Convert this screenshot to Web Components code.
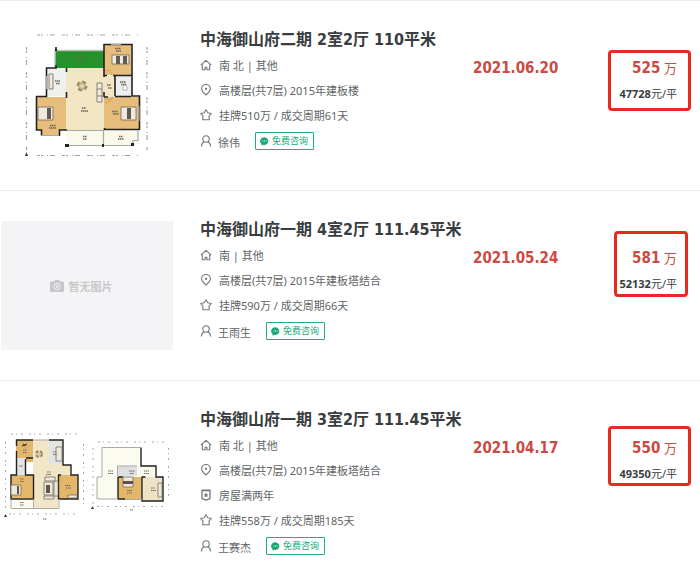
<!DOCTYPE html>
<html lang="zh-CN">
<head>
<meta charset="utf-8">
<title>成交房源</title>
<style>
  body {
    --number-font: "DejaVu Sans Condensed", "Noto Sans CJK SC", sans-serif;
    margin: 0;
    background: #fff;
    color: #606466;
    font-family: "Noto Sans", "Noto Sans CJK SC", sans-serif;
    font-size: 11px;
  }
</style>
</head>
<body>
<main>
  <deal-row>
    <floor-plan slot="thumb" plan="single"></floor-plan>
    <a slot="title" href="#deal-1">中海御山府二期 2室2厅 110平米</a>
    <info-line icon="home">南 北 | 其他</info-line>
    <info-line icon="pin">高楼层(共7层) 2015年建板楼</info-line>
    <info-line icon="star">挂牌510万 / 成交周期61天</info-line>
    <agent-line slot="agent">徐伟</agent-line>
    <time slot="date" datetime="2021-06-20">2021.06.20</time>
    <deal-price slot="price" total="525" unit="47728"></deal-price>
  </deal-row>
  <deal-row>
    <no-photo slot="thumb">暂无图片</no-photo>
    <a slot="title" href="#deal-2">中海御山府一期 4室2厅 111.45平米</a>
    <info-line icon="home">南 | 其他</info-line>
    <info-line icon="pin">高楼层(共7层) 2015年建板塔结合</info-line>
    <info-line icon="star">挂牌590万 / 成交周期66天</info-line>
    <agent-line slot="agent">王雨生</agent-line>
    <time slot="date" datetime="2021-05-24">2021.05.24</time>
    <deal-price slot="price" total="581" unit="52132" mark="tall"></deal-price>
  </deal-row>
  <deal-row>
    <floor-plan slot="thumb" plan="double"></floor-plan>
    <a slot="title" href="#deal-3">中海御山府一期 3室2厅 111.45平米</a>
    <info-line icon="home">南 北 | 其他</info-line>
    <info-line icon="pin">高楼层(共7层) 2015年建板塔结合</info-line>
    <info-line icon="badge">房屋满两年</info-line>
    <info-line icon="star">挂牌558万 / 成交周期185天</info-line>
    <agent-line slot="agent">王赛杰</agent-line>
    <time slot="date" datetime="2021-04-17">2021.04.17</time>
    <deal-price slot="price" total="550" unit="49350" mark="high"></deal-price>
  </deal-row>
</main>

<script>
const icons = {
  home: '<path d="M.8 6.200 6 1.300l5.200 4.900M2.300 5.500v5.300h2.800V8.200h1.800v2.600h2.800V5.500"/>',
  pin: '<path d="M6 11C3.300 8.500 1.600 6.900 1.600 4.700a4.400 4.200 0 0 1 8.800 0C10.400 6.900 8.700 8.500 6 11z"/><circle cx="6" cy="4.800" r=".6" fill="#73777a"/>',
  star: '<path d="M6 .8 7.800 3.700 11.300 4.500 9 7.200 9.300 10.700H2.700L3 7.200.7 4.500 4.200 3.700z"/>',
  badge: '<path d="M2 1.200h8v8.400L6 11.200 2 9.600zM2 1.700h8" stroke-width="1.300"/><path d="M6 3.500 6.800 5.200 8.400 5.400 7.200 6.600 7.500 8.300 6 7.500 4.500 8.300 4.800 6.600 3.600 5.400 5.200 5.200z" fill="#73777a" stroke="none"/>',
  user: '<circle cx="6" cy="4" r="3.200"/><path d="M1.400 11.500C1.400 9.200 2.600 7.500 4.300 6.800M7.700 6.800c1.700.7 2.900 2.400 2.900 4.700"/>'
};

function iconSvg(name) {
  return `<svg width="12" height="12" viewBox="0 0 12 12" fill="none" stroke="#73777a" stroke-width="1.100" stroke-linejoin="round" aria-hidden="true">${icons[name]}</svg>`;
}

class DealRow extends HTMLElement {
  constructor() {
    super();
    this.attachShadow({ mode: "open" });
  }

  connectedCallback() {
    this.shadowRoot.innerHTML = `
      <style>
      :host {
        display: grid;
        grid-template-columns: 172px minmax(0, 1fr) 86px 118px;
        box-sizing: border-box;
        min-height: 190px;
        padding: 26px 23px 0 1px;
        border-top: 1px solid #eeeeee;
      }
      .thumb {
        padding-top: 4px;
      }
      .info {
        padding-left: 27px;
      }
      h2 {
        margin: 0;
        font-family: var(--number-font);
        font-size: 16px;
        line-height: 25px;
        white-space: nowrap;
      }
      ::slotted(a) {
        color: #393d40;
        text-decoration: none;
      }
      .date {
        padding-top: 28px;
        color: #cb4a42;
        font-family: var(--number-font);
        font-size: 15px;
        font-weight: bold;
        line-height: 26px;
      }
      .price {
        display: flex;
        justify-content: flex-end;
        align-items: flex-start;
        padding-top: 28px;
      }
      </style>
      <div class="thumb"><slot name="thumb"></slot></div>
      <div class="info">
        <h2><slot name="title"></slot></h2>
        <slot></slot>
        <slot name="agent"></slot>
      </div>
      <div class="date"><slot name="date"></slot></div>
      <div class="price"><slot name="price"></slot></div>
    `;
  }
}

class InfoLine extends HTMLElement {
  constructor() {
    super();
    this.attachShadow({ mode: "open" });
  }

  connectedCallback() {
    this.shadowRoot.innerHTML = `
      <style>
      :host {
        display: flex;
        align-items: center;
        gap: 7px;
        height: 25px;
        white-space: nowrap;
      }
      </style>
      ${iconSvg(this.getAttribute("icon"))}
      <span><slot></slot></span>
    `;
  }
}

class AgentLine extends HTMLElement {
  constructor() {
    super();
    this.attachShadow({ mode: "open" });
  }

  connectedCallback() {
    this.shadowRoot.innerHTML = `
      <style>
      :host {
        display: flex;
        align-items: center;
        height: 28px;
        gap: 6px;
        white-space: nowrap;
      }
      .name {
        padding-top: 2px;
      }
      button {
        display: flex;
        align-items: center;
        gap: 3px;
        box-sizing: border-box;
        height: 18px;
        margin-left: 9px;
        padding: 0 5px 0 4px;
        border: 1px solid #22ac7d;
        border-radius: 1px;
        background: #fff;
        color: #18a876;
        font-family: inherit;
        font-size: 9px;
        line-height: 16px;
      }
      </style>
      ${iconSvg("user")}
      <span class="name"><slot></slot></span>
      <button type="button">
        <svg width="9" height="9" viewBox="0 0 9 9" aria-hidden="true">
          <path d="M4.500.3a4.100 3.800 0 1 1-1.200 7.500L1.500 8.800 1.600 7A4.100 3.800 0 0 1 4.500.3z" fill="#18a876"/>
          <path d="M2.600 4h.9M4.200 4h.9M5.800 4h.8" stroke="#fff"/>
        </svg>
        <span>免费咨询</span>
      </button>
    `;
  }
}

class DealPrice extends HTMLElement {
  constructor() {
    super();
    this.attachShadow({ mode: "open" });
  }

  connectedCallback() {
    const total = this.getAttribute("total");
    const unit = this.getAttribute("unit");
    this.shadowRoot.innerHTML = `
      <style>
      :host {
        --mark: -5px -14px -6px -11px;
        display: block;
        position: relative;
        text-align: right;
        white-space: nowrap;
      }
      :host([mark="tall"]) {
        --mark: -14px -11px -2px -5px;
      }
      :host([mark="high"]) {
        --mark: -9px -14px -1px -11px;
      }
      /* red frame drawn round the two prices */
      :host::after {
        content: "";
        position: absolute;
        inset: var(--mark);
        border: 3px solid #e62a20;
        border-radius: 4px;
      }
      p {
        margin: 0;
      }
      .total {
        color: #cb4a42;
        font-family: var(--number-font);
        font-size: 13px;
        line-height: 26px;
      }
      .total b {
        font-size: 15px;
      }
      .unit {
        color: #393d40;
        line-height: 23px;
      }
      </style>
      <p class="total"><b>${total}</b> 万</p>
      <p class="unit"><b>${unit}</b>元/平</p>
    `;
  }
}

class NoPhoto extends HTMLElement {
  constructor() {
    super();
    this.attachShadow({ mode: "open" });
  }

  connectedCallback() {
    this.shadowRoot.innerHTML = `
      <style>
      :host {
        display: flex;
        align-items: center;
        justify-content: center;
        gap: 5px;
        height: 129px;
        padding-right: 12px;
        background: #f4f3f5;
        color: #c8c8ca;
        font-weight: bold;
      }
      </style>
      <svg width="14" height="12" viewBox="0 0 14 12" aria-hidden="true">
        <path d="M1 1.500h3L5 0h4l1 1.500h3a1 1 0 0 1 1 1V11a1 1 0 0 1-1 1H1a1 1 0 0 1-1-1V2.500a1 1 0 0 1 1-1z" fill="#c8c8ca"/>
        <circle cx="7" cy="6.500" r="3.200" fill="none" stroke="#f4f3f5"/>
        <circle cx="7" cy="6.500" r="1.200" fill="#f4f3f5"/>
      </svg>
      <span><slot></slot></span>
    `;
  }
}

const plans = {
  single: `
    <g stroke="#a3a3a3" stroke-width="1.200" stroke-dasharray="3 1 2 4 1 2 5 7">
      <path d="M36 4H137M36 124.500H137M25.500 16V119M146 16V119"/>
    </g>
    <path d="M24 125l1.500-4 1.500 4z" fill="#333"/>
    <path d="M54 19h49v18H54z" fill="#26902c"/>
    <path d="M54 19.500h49M54 19v18" stroke="#b9c4b9" stroke-width="1.500"/>
    <path d="M65 37h38v8h11v21h-11v33H65z" fill="#f2e6c5"/>
    <path d="M45 37h20v28H45z" fill="#f0f0ee"/>
    <path d="M103 14h27v30h-27zM35 66h30v33h-7v6H41v-6h-6zM103 66h35v33h-35z" fill="#e6bd7b"/>
    <path d="M114 45h16v20h-16z" fill="#eceeee"/>
    <path d="M65 100h37v14H65zM103 100h34v14h-34z" fill="#f9faec"/>
    <g fill="none" stroke="#222" stroke-width="1.600">
      <path d="M55 16v2M55 34v3H45.500v28.500H35.500V99H40.500v5.500M58.500 105v-6H66M65.500 41v-4M65.500 61v6M103 46V13.500h28V65h7.500v33.500h-35V97M103 66v-5M103 66h4M114 65.500h16M114 45v20M103 44.500h3M112 44.500h19"/>
    </g>
    <g fill="none" stroke="#a8aaa5" stroke-width="1.200">
      <path d="M41 104.500h17M66 99.500h37M66 114.500h36M102.500 100v15M103 114.500h29v-5h5V100M110 13.500h10M45.500 45v13M138 75v15"/>
    </g>
    <path d="M64 113h4v3h-4zM101 113h2v3h-2zM130 112h3v3h-3zM54 18h2v2h-2z" fill="#222"/>
    <g fill="#eeeae0" stroke="#6f6659" stroke-width=".8">
      <path d="M37 76h15v13H37zM120 76h15v13h-15zM111 24h17v9h-17zM96 52h5v19h-5zM96 58h5M96 65h5M48 43h4v15h-4z"/>
    </g>
    <path d="M46 77h4v11h-4zM126 77h4v11h-4zM115 25h4v8h-4zM122 25h4v8h-4z" fill="#635a52"/>
    <circle cx="81" cy="55" r="4.500" fill="#d5c496" stroke="#948763" stroke-width="2" stroke-dasharray="4 3"/>
    <circle cx="81" cy="55" r="2.500" fill="#e7d8ae" stroke="#948763" stroke-width=".6"/>
    <path d="M122 59v-3q0-2 2-2t2 2v3z" fill="#fff" stroke="#999" stroke-width=".7"/>
    <path d="M104 69q6-1 8-3M104 72q5 0 8-5M104 40q5-3 7 4" fill="none" stroke="#c79752" stroke-width=".7"/>
    <g stroke="#6c6456" stroke-width="1.300" stroke-dasharray="1.500 .5">
      <path d="M114 17.500h6M115 20h5M54 50h5M55 52.500h4M81 77h4M80 80h7M49 94.500h6M48 97h7M111 80.500h6M112 83h6M119 51h6M120 53.500h5M106 54h4M107 57h4M82 105.500h4M82 108h4M118 105.500h4M117 108h6M76 27.500h8"/>
    </g>`,
  double: `
    <g stroke="#aaa" stroke-width="1" stroke-dasharray="2 3 1 4 2 6">
      <path d="M10 23H77M8 103H80M4.500 31V102M82.500 33V97M92 37V94M97 31H164M96 95.500H165M167.500 37V88"/>
    </g>
    <path d="M32 29h30v25h8v10h-13v34H32z" fill="#f2e6c8"/>
    <path d="M15 29h17v22h-7v-4H15zM10 64h22v23H10zM57 64h20v24H57z" fill="#e2b66b"/>
    <path d="M48 29h14v24H48zM15 47h9v17h-9z" fill="#e3e4e5"/>
    <path d="M10 87h22v10H10zM101 37h39v29h-23v22H96V66h5z" fill="#fbfbef"/>
    <path d="M141 55h14v11h-14z" fill="#fbfaee"/>
    <path d="M116 55h20v10h-20z" fill="#dedfe0"/>
    <path d="M117 66h24v22h-24z" fill="#e2b66b"/>
    <path d="M142 66h20v24h-20z" fill="#eee2c5"/>
    <g fill="none" stroke="#222" stroke-width="1.400">
      <path d="M32 29H15.500V35M15.500 40v24H10v24h22.500V64H24.500V48M48 29h14v25h8v10h7v24H57.500V64M25 47h7M57 64h3M140 36.500V55h15v11h7v24h-21V66M117 66v22h7M117 66h5M140.500 66h4"/>
    </g>
    <g fill="none" stroke="#a9aba6" stroke-width="1">
      <path d="M32 29h16M10 88v9.500h48V88M32.500 88v9M101 66V36.500h39M101 66h-5v22h21M116.500 65V55H136M124 88.500h17"/>
    </g>
    <g fill="#eee9de" stroke="#756c5e" stroke-width=".8">
      <path d="M10 74h10v10H10zM43 71h9v13h-9zM44 66h10v4H44zM53 70h4v15h-4zM43 85h10v3H43zM67 84h9v3h-9zM122 66h10v10h-10zM55 36h6v14h-6zM157 72h4v14h-4z"/>
    </g>
    <path d="M16 75h2v8h-2zM45 74h4v8h-4zM122 70h10v3h-10z" fill="#5d554c"/>
    <circle cx="38" cy="43" r="3" fill="#ddcca3" stroke="#958866" stroke-width="2" stroke-dasharray="3 2"/>
    <path d="M21 35l5-2M22 33l3 2" stroke="#444" stroke-width="1.200"/>
    <g stroke="#6f685c" stroke-width="1.200" stroke-dasharray="1.500 .5">
      <path d="M22 39h4M22 41.500h4M52 41h4M52 43.500h4M46 61h4M45 63.500h5M18 55h4M19 68h4M19 70.500h4M19 91.500h4M19 94h4M64 74.500h6M65 77h5M107 60h5M107 62.500h5M128 60h6M129 62.500h4M143 60h5M143 62.500h5M126 79.500h5M126 82h5M150 77h4M150 79.500h5M42 108h4M129 99h3"/>
    </g>
    <path d="M3 106l1.500-3 1.500 3zM90 98l1.500-3 1.500 3z" fill="#333"/>`
};

class FloorPlan extends HTMLElement {
  constructor() {
    super();
    this.attachShadow({ mode: "open" });
  }

  connectedCallback() {
    this.shadowRoot.innerHTML = `
      <style>
      :host {
        display: block;
      }
      svg {
        display: block;
      }
      </style>
      <svg width="172" height="129" viewBox="0 0 172 129" role="img" aria-label="户型图">${plans[this.getAttribute("plan")]}</svg>
    `;
  }
}

customElements.define("deal-row", DealRow);
customElements.define("info-line", InfoLine);
customElements.define("agent-line", AgentLine);
customElements.define("deal-price", DealPrice);
customElements.define("no-photo", NoPhoto);
customElements.define("floor-plan", FloorPlan);
</script>
</body>
</html>
